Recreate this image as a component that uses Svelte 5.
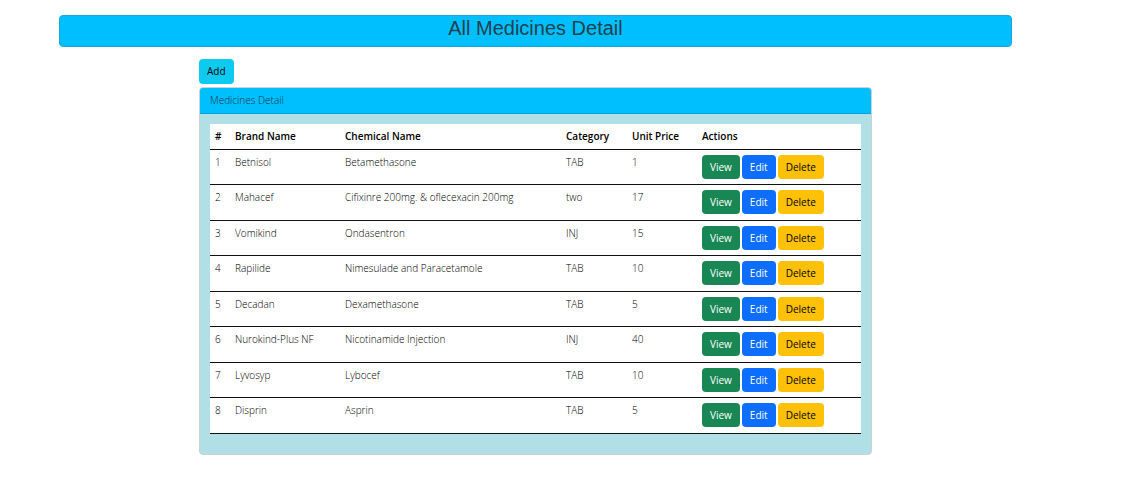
<script>
  const medicines = [
    { id: 1, brand: 'Betnisol', chemical: 'Betamethasone', category: 'TAB', price: 1 },
    { id: 2, brand: 'Mahacef', chemical: 'Cifixinre 200mg. & oflecexacin 200mg', category: 'two', price: 17 },
    { id: 3, brand: 'Vomikind', chemical: 'Ondasentron', category: 'INJ', price: 15 },
    { id: 4, brand: 'Rapilide', chemical: 'Nimesulade and Paracetamole', category: 'TAB', price: 10 },
    { id: 5, brand: 'Decadan', chemical: 'Dexamethasone', category: 'TAB', price: 5 },
    { id: 6, brand: 'Nurokind-Plus NF', chemical: 'Nicotinamide Injection', category: 'INJ', price: 40 },
    { id: 7, brand: 'Lyvosyp', chemical: 'Lybocef', category: 'TAB', price: 10 },
    { id: 8, brand: 'Disprin', chemical: 'Asprin', category: 'TAB', price: 5 }
  ];
</script>

<main class="page">
  <h1 class="banner">All Medicines Detail</h1>

  <div class="content">
    <button class="btn add" type="button">Add</button>

    <section class="card">
      <h2 class="card-header">Medicines Detail</h2>
      <div class="card-body">
        <table>
          <colgroup>
            <col class="col-id" />
            <col class="col-brand" />
            <col class="col-chemical" />
            <col class="col-category" />
            <col class="col-price" />
            <col class="col-actions" />
          </colgroup>
          <thead>
            <tr>
              <th scope="col">#</th>
              <th scope="col">Brand Name</th>
              <th scope="col">Chemical Name</th>
              <th scope="col">Category</th>
              <th scope="col">Unit Price</th>
              <th scope="col">Actions</th>
            </tr>
          </thead>
          <tbody>
            {#each medicines as m (m.id)}
              <tr>
                <td>{m.id}</td>
                <td>{m.brand}</td>
                <td>{m.chemical}</td>
                <td>{m.category}</td>
                <td>{m.price}</td>
                <td>
                  <div class="actions">
                    <button class="btn view" type="button">View</button>
                    <button class="btn edit" type="button">Edit</button>
                    <button class="btn delete" type="button">Delete</button>
                  </div>
                </td>
              </tr>
            {/each}
          </tbody>
        </table>
      </div>
    </section>
  </div>
</main>

<style>
  :global(body) {
    background: #fff;
  }

  .page {
    box-sizing: border-box;
    padding: 15px 112px 31px 59px;
    font-family: 'Open Sans', 'Noto Sans', sans-serif;
    font-size: 10px;
    line-height: 15px;
    color: #212529;
  }

  .banner {
    box-sizing: border-box;
    margin: 0;
    padding-bottom: 5px;
    border: 1px solid #14a8da;
    border-radius: 4px;
    background: #00bfff;
    color: #24414e;
    font: 400 20px/25px 'Liberation Sans', Arial, sans-serif;
    text-align: center;
  }

  .content {
    display: flex;
    flex-direction: column;
    align-items: flex-start;
    gap: 3px;
    padding: 12px 140px 0;
  }

  .card {
    box-sizing: border-box;
    width: 100%;
    overflow: hidden;
    border: 1px solid #c8d2d4;
    border-radius: 4px;
    background: #b0e0e6;
  }

  .card-header {
    margin: 0;
    padding: 5px 10px;
    border-bottom: 1px solid #08a3da;
    background: #00bfff;
    color: #10323f;
    font-size: 10px;
    font-weight: 350;
    line-height: 15px;
  }

  .card-body {
    padding: 10px 10px 20px;
  }

  table {
    width: 100%;
    table-layout: fixed;
    border-collapse: separate;
    border-spacing: 0;
    background: #fff;
    color: #000;
  }

  .col-id {
    width: 20px;
  }

  .col-brand {
    width: 110px;
  }

  .col-category {
    width: 66px;
  }

  .col-price {
    width: 70px;
  }

  .col-actions {
    width: 164px;
  }

  th,
  td {
    box-sizing: border-box;
    height: 35px;
    padding: 5px 5px 4px;
    border-bottom: 1px solid #111;
    text-align: left;
    vertical-align: top;
    white-space: nowrap;
  }

  th {
    height: 26px;
    font-weight: 650;
  }

  td {
    font-weight: 350;
  }

  tbody tr:nth-child(even) td {
    height: 36px;
  }

  .actions {
    display: flex;
    gap: 2px;
  }

  .btn {
    box-sizing: border-box;
    height: 24px;
    padding: 0 8px;
    border: 0;
    border-radius: 4px;
    font: inherit;
    font-weight: 400;
    color: #000;
    cursor: pointer;
  }

  .add {
    height: 25px;
    background: #0dcaf0;
  }

  .view {
    background: #198754;
    color: #fff;
  }

  .edit {
    background: #0d6efd;
    color: #fff;
  }

  .delete {
    background: #ffc107;
  }
</style>
